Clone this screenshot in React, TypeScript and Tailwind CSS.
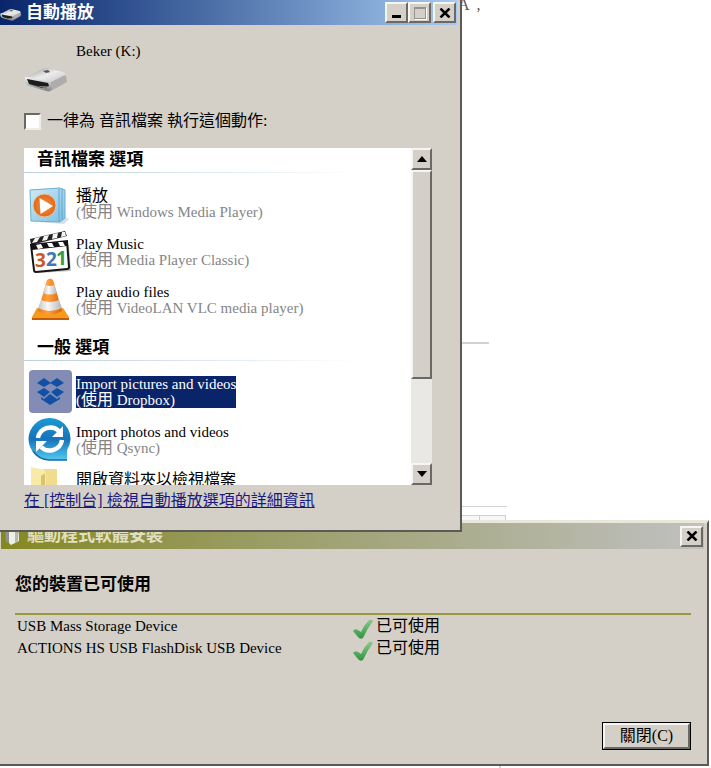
import React, { type ReactNode } from 'react';

const raised =
  'border-2 border-t-[#f6f5f2] border-l-[#f6f5f2] border-r-[#6b6964] border-b-[#6b6964] bg-[#d4d0c8]';

function DriveIcon({ className }: { className: string }) {
  return (
    <svg viewBox="0 0 44 24" className={className} aria-hidden="true">
      <defs>
        <linearGradient id="driveTop" x1="0" y1="0" x2="1" y2="1">
          <stop offset="0" stopColor="#8f8f8f" />
          <stop offset="0.5" stopColor="#ececec" />
          <stop offset="1" stopColor="#c4c4c4" />
        </linearGradient>
        <linearGradient id="driveSide" x1="0" y1="0" x2="0" y2="1">
          <stop offset="0" stopColor="#f4f4f4" />
          <stop offset="1" stopColor="#838383" />
        </linearGradient>
      </defs>
      <path d="M3 17 L25 24 L43 14 L42 8 L24 19Z" fill="#8d8b87" opacity="0.5" />
      <path d="M1 10 L18 1 Q20 0 23 0 L39 4 Q42 5 41 8 L27 15 L3 12Z" fill="url(#driveTop)" />
      <path d="M1 9 Q0 12 2 16 L5 18 L23 23 Q27 23 28 21 L27 14 L4 9Z" fill="url(#driveSide)" />
      <path d="M27 14 L41 7 Q43 11 40 14 L28 21Z" fill="#adadad" />
      <path d="M3 11 L24 15 L25 18 L18 20 L5 16Z" fill="#1c1c1c" />
      <path d="M6 16 L14 18 L22 18 L23 21Z" fill="#777" />
      <path d="M19 3 L24 2 L26 4 L22 5Z" fill="#555" />
    </svg>
  );
}

function MediaPlayerIcon() {
  return (
    <svg viewBox="0 0 44 44" className="size-11" aria-hidden="true">
      <defs>
        <linearGradient id="wmpBox" x1="0" y1="0" x2="1" y2="1">
          <stop offset="0" stopColor="#d0ebf6" />
          <stop offset="1" stopColor="#7dbfe2" />
        </linearGradient>
        <radialGradient id="wmpDisc">
          <stop offset="0" stopColor="#f58e3c" />
          <stop offset="1" stopColor="#dd6b1c" />
        </radialGradient>
      </defs>
      <path d="M10 41 L36 43 L41 38 L34 34Z" fill="#b9cbd3" opacity="0.6" />
      <path d="M2 9 L32 7 L37 9 L37 37 L32 41 L3 40Z" fill="url(#wmpBox)" stroke="#69afd0" />
      <path d="M31 8 V41 M34 8 V39" stroke="#5ca9cf" fill="none" />
      <circle cx="16.500" cy="24.500" r="11.500" fill="url(#wmpDisc)" stroke="#f0c3a0" />
      <path d="M11.500 17 L25 25 L12.500 33Z" fill="#fff" />
    </svg>
  );
}

function ClapperIcon() {
  return (
    <svg viewBox="0 0 44 44" className="size-11" aria-hidden="true">
      <path d="M5 18 L41 16 L43 42 L10 44Z" fill="#999" opacity="0.6" />
      <path d="M2 10 L37 2 L39 7 L3 16Z" fill="#222" />
      <path d="M7 9 L12 8 L9 13 L4 14Z M16 7 L21 6 L19 11 L14 12Z M25 5 L30 4 L29 9 L24 10Z M34 3 L37 3 L38 7 L33 8Z" fill="#f4f4f4" />
      <path d="M3 16 L39 12 L41 38 Q41 40 39 40 L8 43 Q6 43 6 41Z" fill="#fff" stroke="#151515" strokeWidth="2" />
      <path d="M3 16 L39 12 V17 L4 21Z" fill="#151515" />
      <path d="M8 16 L13 15 L15 19 L10 20Z M19 14 L24 14 L26 18 L21 18Z M30 13 L35 13 L37 17 L32 17Z" fill="#fff" />
      <g fontFamily="Open Sans, sans-serif" fontSize="19" fontWeight="bold">
        <text x="7" y="38" fill="#c95a28">3</text>
        <text x="18" y="37" fill="#3d78b8">2</text>
        <text x="28" y="36" fill="#3b9942">1</text>
      </g>
    </svg>
  );
}

function ConeIcon() {
  return (
    <svg viewBox="0 0 44 44" className="size-11" aria-hidden="true">
      <defs>
        <linearGradient id="coneOrange" x1="0" x2="1">
          <stop offset="0" stopColor="#ee7410" />
          <stop offset="0.4" stopColor="#ffa23c" />
          <stop offset="1" stopColor="#dc5f05" />
        </linearGradient>
        <linearGradient id="coneWhite" x1="0" x2="1">
          <stop offset="0" stopColor="#c6c6c6" />
          <stop offset="0.4" stopColor="#f8f8f8" />
          <stop offset="1" stopColor="#b5b5b5" />
        </linearGradient>
      </defs>
      <path d="M9 31 H35 L41 40 Q41 43 39 43 H5 Q3 43 4 40Z" fill="#f79a20" />
      <path d="M4 41 H41 V43 H4Z" fill="#c75a05" />
      <path d="M19 3 Q22 0 25 3 L34 34 Q22 41 10 34Z" fill="url(#coneOrange)" />
      <path d="M18 8 Q22 10 26 8 L29 16 Q22 19 15 16Z" fill="url(#coneWhite)" />
      <path d="M13 23 Q22 27 31 23 L34 31 Q22 37 10 31Z" fill="url(#coneWhite)" />
    </svg>
  );
}

function DropboxIcon() {
  return (
    <svg viewBox="0 0 44 44" className="size-11" aria-hidden="true">
      <rect x="1" y="1" width="43" height="43" rx="4" fill="#838cb5" />
      <g fill="#1150a4">
        <path d="M16 9 L23 14 L16 18 L9 14Z" />
        <path d="M29 9 L36 14 L29 18 L22 14Z" />
        <path d="M16 19 L22 23 L16 28 L9 23Z" />
        <path d="M29 19 L36 23 L29 28 L23 23Z" />
        <path d="M13 28 L16 30 L22 25 L29 30 L32 28 V30 L22 36 L13 30Z" />
      </g>
    </svg>
  );
}

function QsyncIcon() {
  return (
    <svg viewBox="0 0 44 44" className="size-11" aria-hidden="true">
      <defs>
        <linearGradient id="qsync" x1="0" y1="0" x2="0" y2="1">
          <stop offset="0" stopColor="#1c9ad6" />
          <stop offset="0.5" stopColor="#1673b8" />
          <stop offset="1" stopColor="#52caf0" />
        </linearGradient>
      </defs>
      <path d="M21.500 1 A20.500 20.500 0 1 0 21.500 43 H39 V33 A20.500 20.500 0 0 0 21.500 1Z" fill="url(#qsync)" />
      <path d="M5 34 A20 20 0 0 0 21 43 H39" fill="none" stroke="#176a9c" strokeWidth="1.500" />
      <path d="M10 21 A12.500 12.500 0 0 1 31 14" fill="none" stroke="#fff" strokeWidth="4.500" />
      <path d="M35 9 V20 H24Z" fill="#fff" />
      <path d="M34 23 A12.500 12.500 0 0 1 13 30" fill="none" stroke="#fff" strokeWidth="4.500" />
      <path d="M8 35 V24 H19Z" fill="#fff" />
    </svg>
  );
}

function FolderIcon() {
  return (
    <svg viewBox="0 0 44 44" className="size-11" aria-hidden="true">
      <path d="M15 4 H29 V44 H15Z" fill="#f0dc8e" />
      <path d="M3 2 L16 5 Q18 6 18 9 V44 H3Z" fill="#f8eba8" />
      <path d="M13 11 L17 8 V44 H13Z" fill="#d9c46c" />
    </svg>
  );
}

function CheckMark() {
  return (
    <svg viewBox="0 0 22 22" className="mt-1 size-[22px] shrink-0" aria-hidden="true">
      <defs>
        <linearGradient id="tick" x1="0" y1="0" x2="0" y2="1">
          <stop offset="0" stopColor="#8cc88a" />
          <stop offset="1" stopColor="#2f9440" />
        </linearGradient>
      </defs>
      <path d="M0 12 Q2 9 5 11 L8 13 Q11 6 16 1 Q19 0 20 2 Q14 10 10 19 Q7 21 5 18 Z" fill="url(#tick)" />
    </svg>
  );
}

function CloseGlyph() {
  return (
    <svg viewBox="0 0 12 10" className="h-[10px] w-3" aria-hidden="true">
      <path d="M1.500 0.500 L10.500 9.500 M10.500 0.500 L1.500 9.500" stroke="#000" strokeWidth="2.500" />
    </svg>
  );
}

function CaptionButton({ label, children }: { label: string; children: ReactNode }) {
  return (
    <button type="button" aria-label={label} className={`flex h-[21px] w-[23px] items-center justify-center ${raised}`}>
      {children}
    </button>
  );
}

type Entry = { title: string; app?: string; icon: ReactNode; selected?: boolean };

function Section({ heading, entries, first }: { heading: string; entries: Entry[]; first?: boolean }) {
  return (
    <section>
      <h2 className={`pl-[13px] text-[17px] leading-6 font-bold ${first ? '' : 'pt-3'}`}>{heading}</h2>
      <div className="mr-12 h-px bg-linear-to-r from-[#b9cfdd] to-white" />
      <ul className="pt-[7px]">
        {entries.map((e) => (
          <li key={e.title}>
            <button type="button" className="flex h-12 w-full items-start gap-1 pl-1 text-left whitespace-nowrap">
              <span className="shrink-0 pt-px">{e.icon}</span>
              <span
                className={`mt-2 flex flex-col leading-4 ${e.selected ? 'bg-[#0a246a] text-white' : 'text-black'}`}
              >
                <span className={e.app && /^[A-Z]/.test(e.title) ? 'text-[15px]' : 'text-[16px]'}>{e.title}</span>
                {e.app && (
                  <span className={`text-[15px] ${e.selected ? '' : 'text-[#858585]'}`}>
                    (<span className="text-[16px]">使用</span> {e.app})
                  </span>
                )}
              </span>
            </button>
          </li>
        ))}
      </ul>
    </section>
  );
}

const audio: Entry[] = [
  { title: '播放', app: 'Windows Media Player', icon: <MediaPlayerIcon /> },
  { title: 'Play Music', app: 'Media Player Classic', icon: <ClapperIcon /> },
  { title: 'Play audio files', app: 'VideoLAN VLC media player', icon: <ConeIcon /> },
];

const general: Entry[] = [
  { title: 'Import pictures and videos', app: 'Dropbox', icon: <DropboxIcon />, selected: true },
  { title: 'Import photos and videos', app: 'Qsync', icon: <QsyncIcon /> },
  { title: '開啟資料夾以檢視檔案', icon: <FolderIcon /> },
];

function ScrollBar() {
  return (
    <div className="flex w-[21px] shrink-0 flex-col bg-[#eae8e4]">
      <button type="button" aria-label="向上捲動" className={`flex h-[22px] items-center justify-center ${raised}`}>
        <svg viewBox="0 0 10 6" className="h-[6px] w-[10px]"><path d="M0 6 L5 0 L10 6Z" /></svg>
      </button>
      <div className={`h-[209px] ${raised}`} />
      <div className="grow" />
      <button type="button" aria-label="向下捲動" className={`flex h-[22px] items-center justify-center ${raised}`}>
        <svg viewBox="0 0 10 6" className="h-[6px] w-[10px]"><path d="M0 0 L5 6 L10 0Z" /></svg>
      </button>
    </div>
  );
}

function AutoPlayWindow() {
  return (
    <main className="absolute top-0 left-0 w-[462px] border-r-2 border-b-2 border-[#5c5a56] bg-[#d4d0c8] pb-[17px]">
      <header className="mr-[3px] flex h-[25px] items-center bg-linear-to-r from-[#0a246a] to-[#a6caf0] pr-px">
        <DriveIcon className="mt-1 h-3 w-[22px]" />
        <h1 className="ml-1 grow text-[17px] leading-6 font-bold text-white">自動播放</h1>
        <CaptionButton label="最小化">
          <span className="mt-2 h-[3px] w-[9px] bg-black" />
        </CaptionButton>
        <CaptionButton label="最大化">
          <span className="h-3 w-3 border border-t-2 border-[#96938c] shadow-[1px_1px_0_#fff]" />
        </CaptionButton>
        <span className="w-[2px]" />
        <CaptionButton label="關閉">
          <CloseGlyph />
        </CaptionButton>
      </header>
      <div className="pr-7 pl-6">
        <p className="pt-4 pl-[52px] text-[15px] leading-5">Beker (K:)</p>
        <DriveIcon className="mt-[7px] h-6 w-11" />
        <label className="mt-[19px] flex h-5 items-center gap-[6px] text-[16px] whitespace-nowrap">
          <input
            type="checkbox"
            className="size-[17px] appearance-none border-2 border-t-[#6b6863] border-r-[#efede8] border-b-[#efede8] border-l-[#6b6863] bg-white"
          />
          一律為 音訊檔案 執行這個動作:
        </label>
        <div className="mt-[17px] flex h-[337px] bg-white">
          <div className="min-w-0 grow overflow-hidden">
            <Section heading="音訊檔案 選項" entries={audio} first />
            <Section heading="一般 選項" entries={general} />
          </div>
          <ScrollBar />
        </div>
        <a href="#autoplay" className="mt-1 block w-fit text-[16px] leading-6 text-[#1a1a80] underline">
          在 [控制台] 檢視自動播放選項的詳細資訊
        </a>
      </div>
    </main>
  );
}

const devices = ['USB Mass Storage Device', 'ACTIONS HS USB FlashDisk USB Device'];

function DriverWindow() {
  return (
    <section className="absolute top-[520px] right-[2px] left-0 border-t-[3px] border-r-2 border-b-2 border-t-[#e8e7da] border-r-[#5c5a56] border-b-[#5c5a56] bg-[#d4d0c8]">
      <header className="mr-[3px] ml-px flex h-[26px] items-center bg-linear-to-r from-[#85881c] to-[#c0c0c0] pr-[1px]">
        <svg viewBox="0 0 18 20" className="ml-[2px] h-5 w-[18px]" aria-hidden="true">
          <path d="M2 2 L8 0 V17 L3 16Z" fill="#8f918e" />
          <path d="M6 2 L14 1 Q16 2 16 15 L8 19 L6 17Z" fill="#eeeeea" />
          <path d="M12 2 L15 2 V15 L12 17Z" fill="#b7b7b2" />
        </svg>
        <h2 className="ml-[6px] grow text-[17px] leading-6 font-bold text-[#e3e0c0]">驅動程式軟體安裝</h2>
        <CaptionButton label="關閉">
          <CloseGlyph />
        </CaptionButton>
      </header>
      <div className="px-4 pb-[14px] pl-[15px]">
        <h3 className="pt-6 text-[17px] leading-6 font-bold">您的裝置已可使用</h3>
        <div className="mt-4 h-[2px] bg-[#9a9a3c]" />
        <table className="w-full text-left">
          <tbody>
            {devices.map((d) => (
              <tr key={d} className="h-[22px]">
                <td className="w-1/2 p-0 pl-[2px] text-[15px] leading-[22px] whitespace-nowrap">{d}</td>
                <td className="p-0 text-[16px] leading-[22px]">
                  <span className="flex h-[22px] items-start gap-px">
                    <CheckMark />
                    已可使用
                  </span>
                </td>
              </tr>
            ))}
          </tbody>
        </table>
        <div className="mt-[63px] flex justify-end">
          <button type="button" className="flex h-7 w-[89px] border border-black text-[16px]">
            <span className={`flex h-full w-full items-center justify-center ${raised}`}>關閉(C)</span>
          </button>
        </div>
      </div>
    </section>
  );
}

export default function App() {
  return (
    <div className="relative h-screen overflow-hidden bg-white font-['Liberation_Serif','Noto_Sans_CJK_TC',serif] text-black">
      <div className="absolute -top-[5px] left-[458px] flex gap-[7px] text-[16px] leading-5 text-[#555]">
        <span>A</span>
        <span>,</span>
      </div>
      <div className="absolute top-[342px] left-[461px] h-[2px] w-7 bg-[#d3d3d3]" />
      <div className="absolute top-[506px] left-[461px] h-px w-[46px] bg-[#d3d3d3]" />
      <div className="absolute top-[515px] left-[461px] flex h-[5px] w-[45px] border-t border-r border-[#cfcfd4] bg-[#f7f7f9]">
        <div className="w-[19px] border-r border-[#cfcfd4]" />
      </div>
      <div className="absolute top-[765px] left-[499px] h-[3px] w-[2px] bg-[#d3d3d3]" />
      <DriverWindow />
      <AutoPlayWindow />
    </div>
  );
}
